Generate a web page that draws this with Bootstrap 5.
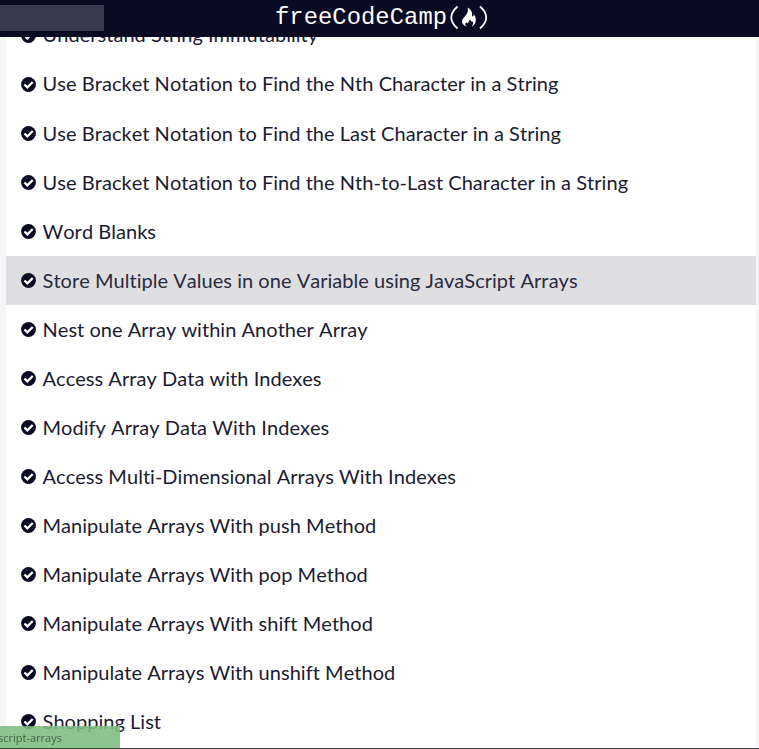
<!DOCTYPE html>
<html lang="en">
<head>
<meta charset="utf-8">
<meta name="viewport" content="width=device-width, initial-scale=1">
<title>freeCodeCamp</title>
<link href="https://cdn.jsdelivr.net/npm/bootstrap@5.3.0/dist/css/bootstrap.min.css" rel="stylesheet">
<style>
body{height:749px;overflow:hidden;background:#f5f6f7;font-family:Lato,sans-serif;color:#1b1b32}
.site-nav{height:37px;background:#0a0a23;z-index:5}
.search-box{width:104px;height:26px;margin-top:5px;background:#3b3b4f}
.brand{left:270px;top:0}
.brand text{font-family:"Liberation Mono",monospace;font-size:23.8px;fill:#fff}
.lessons{margin:-26px 3px 0 6px;background:#fff;height:738px;overflow:hidden}
.lesson{height:49px;padding-left:15px;gap:6.5px;font-size:20px;line-height:49px;letter-spacing:.03px;font-kerning:none;font-variant-ligatures:none;white-space:nowrap}
.lesson:nth-child(-n+2) span{margin-top:-2px}
.lesson svg{flex:none;width:15px;height:15px;margin-top:-1px}
.lesson.current{background:#dfdfe2;color:#2a2a40}
.status{left:0;bottom:1px;width:120px;height:22px;background:rgba(124,189,126,.88);color:#48604c;font:11px/23px "Open Sans",sans-serif;overflow:hidden;white-space:nowrap}
.status span{margin-left:-2px}
.edge{left:0;right:0;bottom:0;height:1px;background:#3c3c3e}
</style>
<script src="https://cdn.jsdelivr.net/npm/bootstrap@5.3.0/dist/js/bootstrap.bundle.min.js"></script>
</head>
<body>
<svg class="d-none"><symbol id="check" viewBox="0 0 15 15"><circle cx="7.5" cy="7.5" r="7.4" fill="#0a0a23"/><path d="M3.4 7.5 6.4 10.4 11.7 5" fill="none" stroke="#fff" stroke-width="2.3"/></symbol></svg>
<nav class="site-nav position-relative d-flex">
<div class="search-box"></div>
<svg class="brand position-absolute" width="224" height="37" aria-label="freeCodeCamp">
<text x="5" y="24" textLength="172">freeCodeCamp</text>
<path d="M187.500 6.500Q175 17.500 187.500 28.500M210 6.500Q222.500 17.500 210 28.500" fill="none" stroke="#fff" stroke-width="1.8"/>
<path d="M197.500 7.500C202 10 202.500 13 202 16.500C203.500 16.500 204 15.300 203.600 14C206 17 206.500 20 205 23.500Q204 25.500 201.500 26.500C204 23.500 203.500 21.500 201.500 21.500C200.500 21.500 200.500 20.500 200.800 19.500C198 20.500 199 23 197.500 23.300C196.500 23.500 196.500 22.500 196.700 22C194.500 23.500 195.200 25.500 197 26.500C192.500 25.500 190.500 21.500 193.500 18C196 15 199 12.500 197.500 7.500Z" fill="#fff"/>
</svg>
</nav>
<main class="lessons">
<div class="lesson d-flex align-items-center"><svg><use href="#check"/></svg><span>Understand String Immutability</span></div>
<div class="lesson d-flex align-items-center"><svg><use href="#check"/></svg><span>Use Bracket Notation to Find the Nth Character in a String</span></div>
<div class="lesson d-flex align-items-center"><svg><use href="#check"/></svg><span>Use Bracket Notation to Find the Last Character in a String</span></div>
<div class="lesson d-flex align-items-center"><svg><use href="#check"/></svg><span>Use Bracket Notation to Find the Nth-to-Last Character in a String</span></div>
<div class="lesson d-flex align-items-center"><svg><use href="#check"/></svg><span>Word Blanks</span></div>
<div class="lesson current d-flex align-items-center"><svg><use href="#check"/></svg><span>Store Multiple Values in one Variable using JavaScript Arrays</span></div>
<div class="lesson d-flex align-items-center"><svg><use href="#check"/></svg><span>Nest one Array within Another Array</span></div>
<div class="lesson d-flex align-items-center"><svg><use href="#check"/></svg><span>Access Array Data with Indexes</span></div>
<div class="lesson d-flex align-items-center"><svg><use href="#check"/></svg><span>Modify Array Data With Indexes</span></div>
<div class="lesson d-flex align-items-center"><svg><use href="#check"/></svg><span>Access Multi-Dimensional Arrays With Indexes</span></div>
<div class="lesson d-flex align-items-center"><svg><use href="#check"/></svg><span>Manipulate Arrays With push Method</span></div>
<div class="lesson d-flex align-items-center"><svg><use href="#check"/></svg><span>Manipulate Arrays With pop Method</span></div>
<div class="lesson d-flex align-items-center"><svg><use href="#check"/></svg><span>Manipulate Arrays With shift Method</span></div>
<div class="lesson d-flex align-items-center"><svg><use href="#check"/></svg><span>Manipulate Arrays With unshift Method</span></div>
<div class="lesson d-flex align-items-center"><svg><use href="#check"/></svg><span>Shopping List</span></div>
</main>
<div class="status position-fixed"><span>script-arrays</span></div>
<div class="edge position-fixed"></div>
</body>
</html>
